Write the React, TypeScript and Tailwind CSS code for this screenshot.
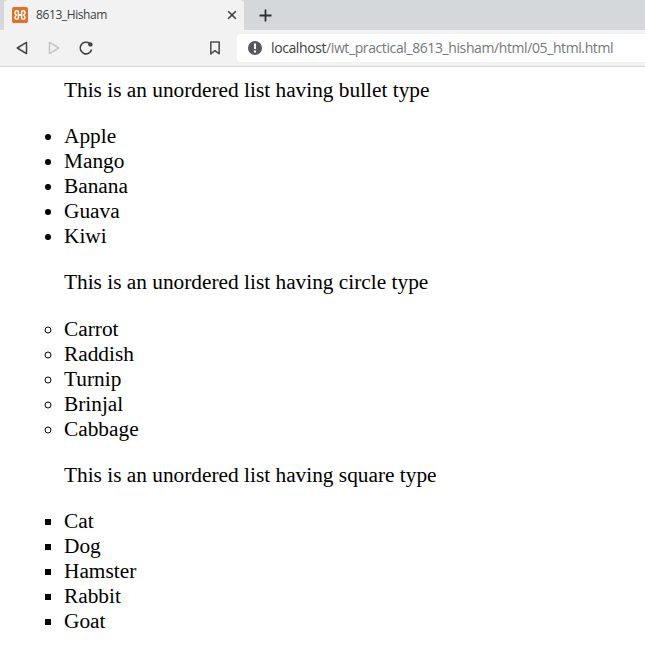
import React from "react";

type Section = { kind: string; marker: string; items: string[] };

const sections: Section[] = [
  { kind: "bullet", marker: "list-disc", items: ["Apple", "Mango", "Banana", "Guava", "Kiwi"] },
  { kind: "circle", marker: "list-[circle]", items: ["Carrot", "Raddish", "Turnip", "Brinjal", "Cabbage"] },
  { kind: "square", marker: "list-[square]", items: ["Cat", "Dog", "Hamster", "Rabbit", "Goat"] },
];

function TabStrip() {
  return (
    <div className="flex h-[30px] bg-[#d4d8db]">
      <div className="flex h-[30px] w-[240px] ml-1 items-center rounded-t-[4px] bg-[#f2f2f2] pl-2">
        <svg className="h-4 w-4 shrink-0" viewBox="0 0 16 16">
          <rect width="16" height="16" rx="1.8" fill="#e17227" />
          <path
            d="M6.2 8H9.8M6.4 6.4V5.2Q6.4 3.8 5 3.8H4.6Q3 3.8 3 5.4Q3 7 4.4 8Q3 9 3 10.6Q3 12.2 4.6 12.2H5Q6.4 12.2 6.4 10.8V5.2M9.6 9.6V5.2Q9.6 3.8 11 3.8H11.4Q13 3.8 13 5.4Q13 7 11.6 8Q13 9 13 10.6Q13 12.2 11.4 12.2H11Q9.6 12.2 9.6 10.8V9.6"
            fill="none"
            stroke="#fff"
            strokeWidth="1.5"
            strokeLinejoin="round"
          />
        </svg>
        <span className="ml-2 w-[191px] whitespace-nowrap font-['Open_Sans',sans-serif] text-[12px] leading-4 tracking-[-0.4px] text-[#3c3f42]">
          8613_Hisham
        </span>
        <svg className="h-[10px] w-[10px] shrink-0" viewBox="0 0 10 10">
          <path d="M1.2 1.2L8.8 8.8M8.8 1.2L1.2 8.8" stroke="#3c3f43" strokeWidth="1.6" />
        </svg>
      </div>
      <svg className="ml-[15px] mt-[9px] h-[13px] w-[13px]" viewBox="0 0 13 13">
        <path d="M6.5 .5V12.5M.5 6.5H12.5" stroke="#2e3134" strokeWidth="1.8" />
      </svg>
    </div>
  );
}

function Toolbar() {
  return (
    <div className="flex h-[37px] items-center border-b border-[#d6d8da] bg-[#f2f2f2]">
      <svg className="ml-4 h-4 w-3" viewBox="0 0 12 16">
        <path d="M10.5 2.4V13.6L1.3 8Z" fill="none" stroke="#3f4144" strokeWidth="1.5" strokeLinejoin="round" />
      </svg>
      <svg className="ml-5 h-4 w-3" viewBox="0 0 12 16">
        <path d="M1.5 2.4V13.6L10.7 8Z" fill="none" stroke="#c3c5c7" strokeWidth="1.5" strokeLinejoin="round" />
      </svg>
      <svg className="ml-[18px] h-4 w-4" viewBox="0 0 16 16">
        <path d="M11.6 3.5A5.8 5.8 0 1 0 13.6 9.5" fill="none" stroke="#3f4144" strokeWidth="1.6" />
        <circle cx="12.4" cy="4.4" r="2.2" fill="#3f4144" />
      </svg>
      <svg className="ml-[115px] h-[14px] w-3" viewBox="0 0 12 14">
        <path d="M1.8 1H10.2V12.8L6 9.7L1.8 12.8Z" fill="none" stroke="#505255" strokeWidth="1.6" strokeLinejoin="round" />
      </svg>
      <div className="ml-4 flex h-7 flex-1 items-center rounded-l-[4px] bg-white pl-[11px]">
        <svg className="h-[14px] w-[14px] shrink-0" viewBox="0 0 14 14">
          <circle cx="7" cy="7" r="7" fill="#54575b" />
          <path d="M5.9 2.5H8.1L7.9 8H6.1Z" fill="#fff" />
          <circle cx="7" cy="10.5" r="1.2" fill="#fff" />
        </svg>
        <span className="ml-[9px] whitespace-nowrap font-['Open_Sans',sans-serif] text-[14px] leading-5 tracking-[-0.4px] text-[#75777a]">
          <span className="text-[#3c3e41]">localhost</span>/iwt_practical_8613_hisham/html/05_html.html
        </span>
      </div>
    </div>
  );
}

export default function App() {
  return (
    <div className="h-[657px] w-full overflow-hidden bg-white">
      <TabStrip />
      <Toolbar />
      <main className="pt-[10.67px] font-['Liberation_Serif',serif] text-[21.333px] leading-[25px] text-black">
        {sections.map((section) => (
          <ul key={section.kind} className={`mb-[21.33px] pl-16 ${section.marker}`}>
            <p className="mb-[21.33px]">This is an unordered list having {section.kind} type</p>
            {section.items.map((item) => (
              <li key={item}>{item}</li>
            ))}
          </ul>
        ))}
      </main>
    </div>
  );
}
